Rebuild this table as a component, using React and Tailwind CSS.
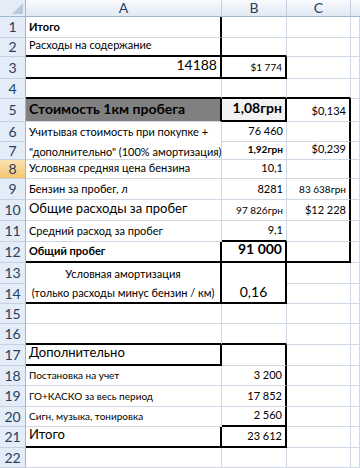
import React from 'react';

// сетка Excel: серые линии, толстые границы чёрные
const Cell = ({ b, r, right, center, className = '', children }) => (
  <div
    className={`flex items-end whitespace-nowrap px-[3px] pb-[2px] ${right ? 'justify-end' : ''} ${center ? 'justify-center' : ''} ${
      b ? 'border-b-2 border-b-black' : 'border-b border-b-[#d0d7e5]'
    } ${r ? 'border-r-2 border-r-black' : 'border-r border-r-[#d0d7e5]'} ${className}`}
  >
    {children}
  </div>
);

const RowHead = ({ n, active }) => (
  <div
    className={`flex items-center justify-center border-b border-b-[#c5d1e2] border-r border-r-[#9eb6ce] text-[14px] leading-none text-[#27405f] ${
      active ? 'bg-gradient-to-b from-[#fbe2ad] to-[#f4c675]' : 'bg-[#e4ecf7]'
    }`}
  >
    {n}
  </div>
);

const ColHead = ({ children, last }) => (
  <div
    className={`flex items-center justify-center bg-gradient-to-b from-[#f8fafd] to-[#e2e9f4] border-b border-b-[#9eb6ce] ${
      last ? '' : 'border-r border-r-[#c5d1e2]'
    } text-[14px] leading-none text-[#27405f]`}
  >
    {children}
  </div>
);

const App = () => {
  return (
    <div className="w-[360px] h-[468px] overflow-hidden bg-white font-['Lato','Roboto',sans-serif] text-[11px] text-black">
      <div className="grid grid-cols-[26px_196px_65px_64px_1fr] grid-rows-[17px_21px_19px_22px_20px_23px_20px_18px_19px_21px_21px_21px_21px_21px_20px_20px_21px_21px_20px_21px_20px_21px_20px]">
        {/* заголовки столбцов */}
        <div className="relative bg-[#e4ecf7] border-b border-b-[#9eb6ce] border-r border-r-[#9eb6ce]">
          <svg className="absolute right-[2px] bottom-[2px]" width="11" height="11" viewBox="0 0 11 11">
            <polygon points="11,0 11,11 0,11" fill="#b9c8dc" />
          </svg>
        </div>
        <ColHead>A</ColHead>
        <ColHead>B</ColHead>
        <ColHead>C</ColHead>
        <ColHead last />

        {/* 1 */}
        <RowHead n="1" />
        <Cell r className="font-bold">Итого</Cell>
        <Cell />
        <Cell />
        <Cell />

        {/* 2 */}
        <RowHead n="2" />
        <Cell r b>Расходы на содержание</Cell>
        <Cell b />
        <Cell />
        <Cell />

        {/* 3 */}
        <RowHead n="3" />
        <Cell r b right className="text-[14px]">14188</Cell>
        <Cell r b right className="text-[10px]">$1 774</Cell>
        <Cell />
        <Cell />

        {/* 4 */}
        <RowHead n="4" />
        <Cell b />
        <Cell b />
        <Cell b />
        <Cell />

        {/* 5 */}
        <RowHead n="5" />
        <Cell r className="bg-[#808080] text-[14px] font-bold">Стоимость 1км пробега</Cell>
        <Cell r b right className="bg-[#f2f2f2] text-[14px] font-bold">1,08грн</Cell>
        <Cell r right>$0,134</Cell>
        <Cell />

        {/* 6-7 */}
        <RowHead n="6" />
        <div className="row-span-2 flex flex-col justify-between whitespace-nowrap px-[3px] pt-[4px] pb-[2px] border-b border-b-[#d0d7e5] border-r border-r-[#d0d7e5] leading-none">
          <span>Учитывая стоимость при покупке +</span>
          <span>"дополнительно" (100% амортизация)</span>
        </div>
        <Cell right>76 460</Cell>
        <Cell r />
        <Cell />

        <RowHead n="7" />
        <Cell right className="text-[10px] font-bold">1,92грн</Cell>
        <Cell r right>$0,239</Cell>
        <Cell />

        {/* 8 */}
        <RowHead n="8" active />
        <Cell>Условная средняя цена бензина</Cell>
        <Cell right>10,1</Cell>
        <Cell r />
        <Cell />

        {/* 9 */}
        <RowHead n="9" />
        <Cell>Бензин за пробег, л</Cell>
        <Cell right>8281</Cell>
        <Cell r right className="text-[10px]">83 638грн</Cell>
        <Cell />

        {/* 10 */}
        <RowHead n="10" />
        <Cell className="text-[13px]">Общие расходы за пробег</Cell>
        <Cell right className="text-[10px]">97 826грн</Cell>
        <Cell r right>$12 228</Cell>
        <Cell />

        {/* 11 */}
        <RowHead n="11" />
        <Cell>Средний расход за пробег</Cell>
        <Cell b right>9,1</Cell>
        <Cell r />
        <Cell />

        {/* 12 */}
        <RowHead n="12" />
        <Cell r b className="font-bold">Общий пробег</Cell>
        <Cell r b right className="text-[14px] font-bold">91 000</Cell>
        <Cell r b />
        <Cell />

        {/* 13-14 */}
        <RowHead n="13" />
        <div className="row-span-2 flex flex-col items-center justify-between whitespace-nowrap pt-[5px] pb-[4px] border-b-2 border-b-black border-r-2 border-r-black leading-none">
          <span>Условная амортизация</span>
          <span>(только расходы минус бензин / км)</span>
        </div>
        <div className="row-span-2 flex items-end justify-center pb-[3px] border-b-2 border-b-black border-r-2 border-r-black text-[14px] leading-none">
          0,16
        </div>
        <Cell />
        <Cell />

        <RowHead n="14" />
        <Cell />
        <Cell />

        {/* 15 */}
        <RowHead n="15" />
        <Cell />
        <Cell />
        <Cell />
        <Cell />

        {/* 16 */}
        <RowHead n="16" />
        <Cell b />
        <Cell b />
        <Cell />
        <Cell />

        {/* 17 */}
        <RowHead n="17" />
        <Cell r b className="text-[13px]">Дополнительно</Cell>
        <Cell r />
        <Cell />
        <Cell />

        {/* 18 */}
        <RowHead n="18" />
        <Cell className="text-[10px]">Постановка на учет</Cell>
        <Cell r right>3 200</Cell>
        <Cell />
        <Cell />

        {/* 19 */}
        <RowHead n="19" />
        <Cell className="text-[10px]">ГО+КАСКО за весь период</Cell>
        <Cell r right>17 852</Cell>
        <Cell />
        <Cell />

        {/* 20 */}
        <RowHead n="20" />
        <Cell className="text-[10px]">Сигн, музыка, тонировка</Cell>
        <Cell r b right>2 560</Cell>
        <Cell />
        <Cell />

        {/* 21 */}
        <RowHead n="21" />
        <Cell r b className="text-[13px]">Итого</Cell>
        <Cell r b right>23 612</Cell>
        <Cell />
        <Cell />

        {/* 22 */}
        <RowHead n="22" />
        <Cell />
        <Cell />
        <Cell />
        <Cell />
      </div>
    </div>
  );
};

export default App;
